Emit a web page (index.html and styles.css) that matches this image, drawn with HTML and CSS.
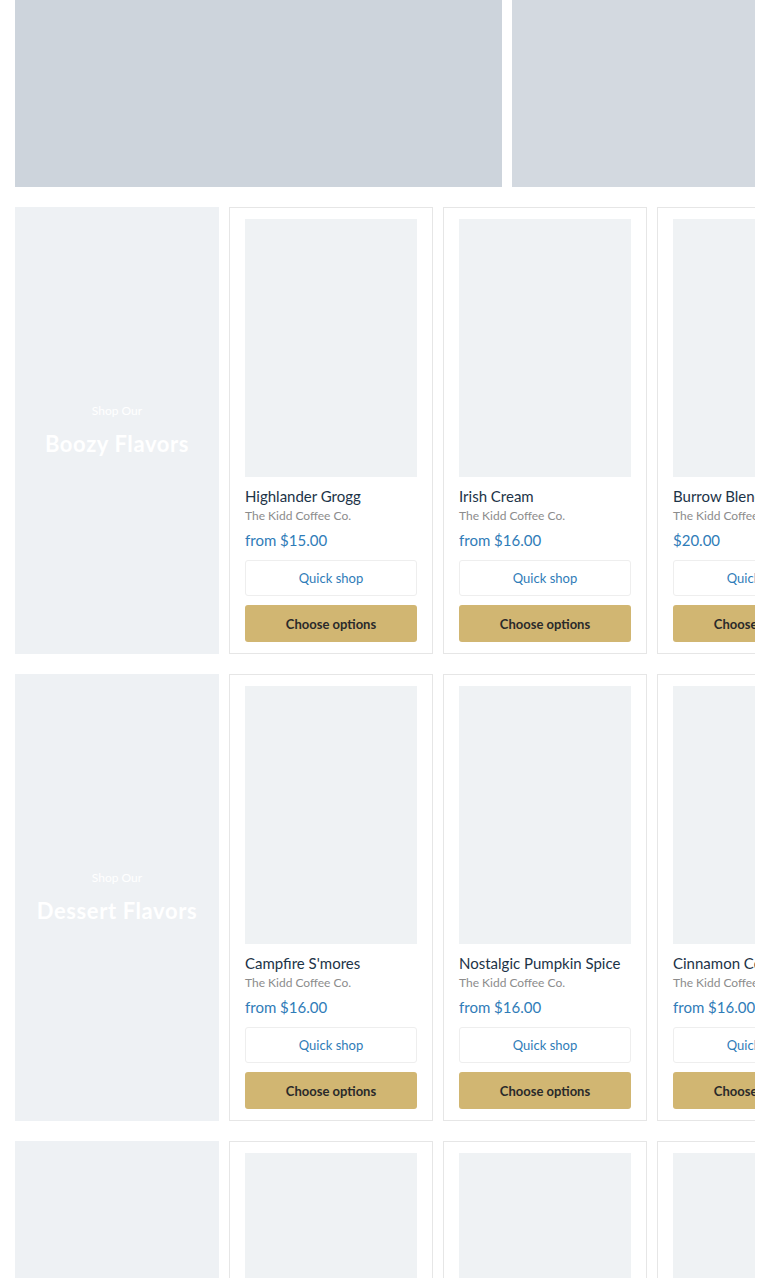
FILE: index.html
```html
<!DOCTYPE html>
<html>
<head>
<meta charset="utf-8">
<link rel="stylesheet" href="styles.css">
</head>
<body>
<div class="page">
  <div class="banners">
    <div class="banner banner-a"></div>
    <div class="banner banner-b"></div>
  </div>

  <div class="row">
    <div class="promo">
      <div class="promo-sub">Shop Our</div>
      <div class="promo-title">Boozy Flavors</div>
    </div>
    <div class="card">
      <div class="card-img"></div>
      <div class="card-title">Highlander Grogg</div>
      <div class="card-vendor">The Kidd Coffee Co.</div>
      <div class="card-price">from $15.00</div>
      <div class="btn-quick">Quick shop</div>
      <div class="btn-choose">Choose options</div>
    </div>
    <div class="card">
      <div class="card-img"></div>
      <div class="card-title">Irish Cream</div>
      <div class="card-vendor">The Kidd Coffee Co.</div>
      <div class="card-price">from $16.00</div>
      <div class="btn-quick">Quick shop</div>
      <div class="btn-choose">Choose options</div>
    </div>
    <div class="card">
      <div class="card-img"></div>
      <div class="card-title">Burrow Blend</div>
      <div class="card-vendor">The Kidd Coffee Co.</div>
      <div class="card-price">$20.00</div>
      <div class="btn-quick">Quick shop</div>
      <div class="btn-choose">Choose options</div>
    </div>
  </div>

  <div class="row">
    <div class="promo">
      <div class="promo-sub">Shop Our</div>
      <div class="promo-title">Dessert Flavors</div>
    </div>
    <div class="card">
      <div class="card-img"></div>
      <div class="card-title">Campfire S'mores</div>
      <div class="card-vendor">The Kidd Coffee Co.</div>
      <div class="card-price">from $16.00</div>
      <div class="btn-quick">Quick shop</div>
      <div class="btn-choose">Choose options</div>
    </div>
    <div class="card">
      <div class="card-img"></div>
      <div class="card-title">Nostalgic Pumpkin Spice</div>
      <div class="card-vendor">The Kidd Coffee Co.</div>
      <div class="card-price">from $16.00</div>
      <div class="btn-quick">Quick shop</div>
      <div class="btn-choose">Choose options</div>
    </div>
    <div class="card">
      <div class="card-img"></div>
      <div class="card-title">Cinnamon Coffee Cake</div>
      <div class="card-vendor">The Kidd Coffee Co.</div>
      <div class="card-price">from $16.00</div>
      <div class="btn-quick">Quick shop</div>
      <div class="btn-choose">Choose options</div>
    </div>
  </div>

  <div class="row">
    <div class="promo"></div>
    <div class="card">
      <div class="card-img"></div>
    </div>
    <div class="card">
      <div class="card-img"></div>
    </div>
    <div class="card">
      <div class="card-img"></div>
    </div>
  </div>
</div>
</body>
</html>
```

FILE: styles.css
```css
html, body {
  margin: 0;
  padding: 0;
  background: #ffffff;
}
body {
  height: 1278px;
  overflow: hidden;
  font-family: Lato, "Open Sans", Arial, sans-serif;
}
.page {
  margin: 0 15px;
  overflow: hidden;
  display: flex;
  flex-direction: column;
  gap: 20px;
}
.banners {
  display: flex;
  gap: 10px;
}
.banner {
  flex: 0 0 487px;
  height: 187px;
}
.banner-a {
  background: #cdd4dc;
}
.banner-b {
  background: #d3d9e0;
}
.row {
  display: flex;
  gap: 10px;
  height: 447px;
  flex: 0 0 447px;
}
.promo {
  flex: 0 0 204px;
  background: #eef1f4;
  display: flex;
  flex-direction: column;
  align-items: center;
  justify-content: center;
  color: #ffffff;
  text-align: center;
}
.promo-sub {
  font-size: 12px;
  line-height: 16px;
  margin-bottom: 11px;
}
.promo-title {
  font-size: 22px;
  line-height: 28px;
  font-weight: 700;
  letter-spacing: 0.6px;
}
.card {
  flex: 0 0 204px;
  box-sizing: border-box;
  border: 1px solid #e6e6e6;
  padding: 11px 15px 11px;
  display: flex;
  flex-direction: column;
}
.card-img {
  height: 258px;
  background: #eff2f4;
  margin-bottom: 9px;
  flex: 0 0 258px;
}
.card-title {
  font-size: 15px;
  line-height: 20px;
  color: #1c3347;
  white-space: nowrap;
}
.card-vendor {
  font-size: 12px;
  line-height: 20px;
  color: #8c8c8c;
  white-space: nowrap;
}
.card-price {
  font-size: 15px;
  line-height: 24px;
  margin-top: 2px;
  color: #2f7cb8;
  white-space: nowrap;
}
.btn-quick {
  margin-top: 8px;
  height: 36px;
  box-sizing: border-box;
  border: 1px solid #eeeeee;
  border-radius: 3px;
  display: flex;
  align-items: center;
  justify-content: center;
  font-size: 13px;
  color: #2f7cb8;
  white-space: nowrap;
}
.btn-choose {
  margin-top: 9px;
  height: 37px;
  background: #d1b672;
  border-radius: 3px;
  display: flex;
  align-items: center;
  justify-content: center;
  font-size: 13px;
  font-weight: 700;
  color: #2a2a2a;
  white-space: nowrap;
}
```
